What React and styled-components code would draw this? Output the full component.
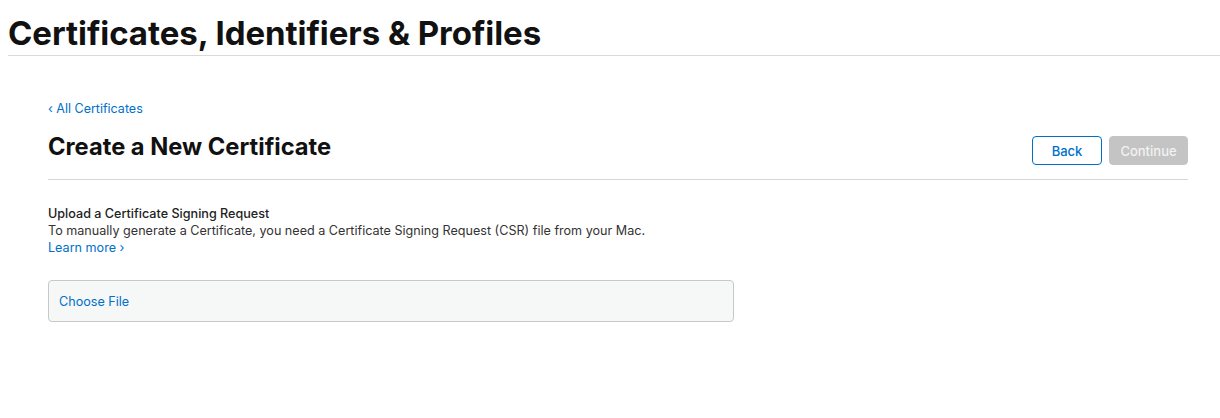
import { createGlobalStyle, styled } from "styled-components";

const GlobalStyle = createGlobalStyle`
    body {
        margin: 0;
        background: #fff;
        font-family: Inter, "Liberation Sans", sans-serif;
        color: #111;
    }
`

export default function App() {
    return (
        <>
            <GlobalStyle />
            <StyledPage>
                <StyledMasthead>
                    <StyledSiteTitle>Certificates, Identifiers &amp; Profiles</StyledSiteTitle>
                </StyledMasthead>
                <StyledMain>
                    <StyledCrumb href="#">‹ All Certificates</StyledCrumb>
                    <StyledHeader>
                        <StyledPageTitle>Create a New Certificate</StyledPageTitle>
                        <StyledActions>
                            <StyledButton type="button">Back</StyledButton>
                            <StyledButton type="button" $primary disabled>Continue</StyledButton>
                        </StyledActions>
                    </StyledHeader>
                    <StyledSection>
                        <StyledSectionTitle>Upload a Certificate Signing Request</StyledSectionTitle>
                        <StyledText>To manually generate a Certificate, you need a Certificate Signing Request (CSR) file from your Mac.</StyledText>
                        <StyledLink href="#">Learn more ›</StyledLink>
                    </StyledSection>
                    <StyledDropZone>
                        <StyledLink href="#">Choose File</StyledLink>
                    </StyledDropZone>
                </StyledMain>
            </StyledPage>
        </>
    )
}

const StyledPage = styled.div`
    width: 1220px;
    height: 418px;
    overflow: hidden;
`

const StyledMasthead = styled.header`
    margin-left: 8px;
    padding-top: 14px;
    padding-bottom: 3px;
    border-bottom: 1px solid #d9d9d9;
`

const StyledSiteTitle = styled.h1`
    margin: 0;
    font-size: 33px;
    line-height: 38px;
    font-weight: 700;
    letter-spacing: -0.05px;
`

const StyledMain = styled.main`
    width: 1140px;
    margin-left: 48px;
    padding-top: 44px;
`

const StyledCrumb = styled.a`
    display: block;
    font-size: 12.5px;
    line-height: 18px;
    color: #0070c9;
    text-decoration: none;
`

const StyledHeader = styled.div`
    display: flex;
    justify-content: space-between;
    align-items: flex-end;
    margin-top: 15px;
    padding-bottom: 14px;
    border-bottom: 1px solid #d6d6d6;
`

const StyledPageTitle = styled.h2`
    margin: 0 0 4px;
    font-size: 23.7px;
    line-height: 28px;
    font-weight: 700;
`

const StyledActions = styled.div`
    display: flex;
    gap: 7px;
`

const StyledButton = styled.button`
    box-sizing: border-box;
    height: 29px;
    width: ${(p) => (p.$primary ? "79px" : "70px")};
    padding: 0;
    border-radius: 4px;
    border: 1px solid ${(p) => (p.$primary ? "#c4c4c4" : "#0070c9")};
    background: ${(p) => (p.$primary ? "#c4c4c4" : "#fff")};
    color: ${(p) => (p.$primary ? "#f2f2f2" : "#0070c9")};
    font-family: inherit;
    font-size: 13px;
    font-weight: 500;
`

const StyledSection = styled.section`
    display: flex;
    flex-direction: column;
    align-items: flex-start;
    margin-top: 25px;
    font-size: 12.6px;
    line-height: 17px;
    color: #333;
`

const StyledSectionTitle = styled.div`
    font-weight: 500;
    color: #222;
`

const StyledText = styled.div`
    color: #333;
`

const StyledLink = styled.a`
    color: #0070c9;
    text-decoration: none;
    font-size: 12.6px;
`

const StyledDropZone = styled.div`
    display: flex;
    align-items: center;
    width: 686px;
    height: 42px;
    box-sizing: border-box;
    margin-top: 24px;
    padding: 0 10px;
    background: #f6f7f7;
    border: 1px solid #c8c8c8;
    border-radius: 4px;
`
